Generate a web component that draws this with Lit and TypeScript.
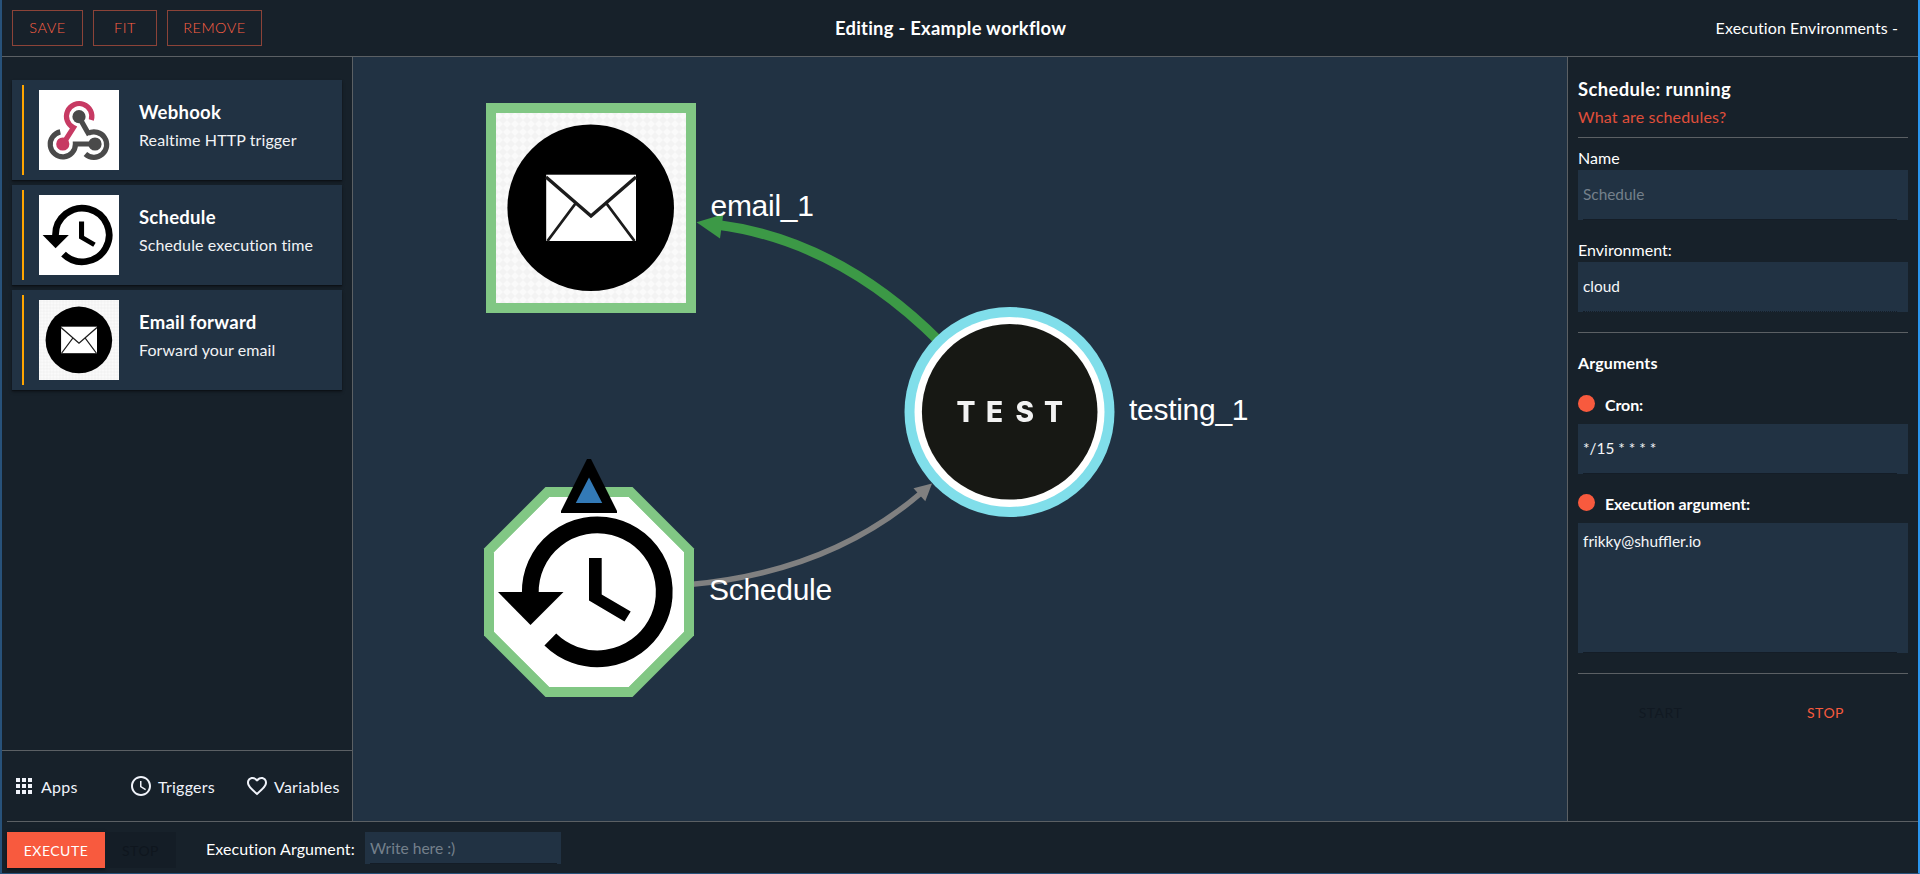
import { LitElement, html, svg, css } from "lit";
import { customElement, property } from "lit/decorators.js";

const emailArt = svg`
  <defs>
    <pattern id="weave" width="8" height="8" patternUnits="userSpaceOnUse">
      <rect width="8" height="8" fill="#fafafa"></rect>
      <path d="M4 0L8 4L4 8L0 4Z" fill="#f3f3f3"></path>
    </pattern>
  </defs>
  <rect width="200" height="200" fill="url(#weave)"></rect>
  <circle cx="99.7" cy="99.8" r="83.3" fill="#000"></circle>
  <rect x="55.2" y="66.7" width="89.8" height="66.3" fill="#fff"></rect>
  <path d="M55 69L100 108L145 69" fill="none" stroke="#1c1c1c" stroke-width="3.4"></path>
  <path d="M84.5 95.5L56.5 133M115.5 95.5L143.5 133" fill="none" stroke="#1c1c1c" stroke-width="2.8"></path>`;

const scheduleArt = svg`
  <rect width="200" height="200" fill="#fff"></rect>
  <path d="M41.3 101A67 67 0 1 1 61.3 147.6" fill="none" stroke="#000" stroke-width="16.8"></path>
  <path d="M9 100H74.5L41.5 133Z"></path>
  <path d="M100 66H112.7V102.5L141.7 119.5L135.5 129.5L100 108.5Z"></path>`;

const webhookArt = svg`
  <rect width="80" height="80" fill="#fff"></rect>
  <g fill="none" stroke="#4a4a4a" stroke-width="5.2">
    <path d="M21.3 41.9A12.6 12.6 0 1 0 36.4 54H56"></path>
    <path d="M40 27L50.2 45"></path>
    <path d="M49.3 43.3A12.7 12.7 0 1 1 46.4 64"></path>
  </g>
  <path d="M52.3 30A12.7 12.7 0 1 0 34.5 37.6L24 54" fill="none" stroke="#c73a63" stroke-width="5.2"></path>
  <circle cx="40" cy="26.7" r="6.6" fill="#4a4a4a"></circle>
  <circle cx="56" cy="54" r="6.6" fill="#4a4a4a"></circle>
  <circle cx="23.8" cy="54" r="6.6" fill="#c73a63"></circle>`;

@customElement("trigger-card")
class TriggerCard extends LitElement {
  @property() heading = "";
  @property() detail = "";
  @property() art = "";

  static styles = css`
    :host { display: flex; height: 100px; box-sizing: border-box; padding: 5px 10px;
      background: #213243; box-shadow: 0 2px 3px rgba(0,0,0,.35), 0 1px 1px rgba(0,0,0,.25); }
    .bar { width: 2px; background: #ffa500; margin-right: 15px; }
    svg { width: 80px; height: 80px; margin-top: 5px; display: block; }
    .texts { margin: 15px 0 0 20px; }
    .heading { font-size: 18.5px; line-height: 25px; font-weight: 700; color: #fff; letter-spacing: .25px; }
    .detail { font-size: 16px; line-height: 20px; margin-top: 5px; color: #f1f3f5; letter-spacing: .1px; }
  `;

  render() {
    const box = this.art === "webhook" ? "0 0 80 80" : "0 0 200 200";
    const drawing = this.art === "webhook" ? webhookArt : this.art === "email" ? emailArt : scheduleArt;
    return html`
      <div class="bar"></div>
      <svg viewBox=${box}>${drawing}</svg>
      <div class="texts">
        <div class="heading">${this.heading}</div>
        <div class="detail">${this.detail}</div>
      </div>`;
  }
}

@customElement("flow-canvas")
class FlowCanvas extends LitElement {
  static styles = css`
    :host { display: block; background: #213243; overflow: hidden; }
    svg { display: block; }
    .label { font: 30px "Liberation Sans", Arial, sans-serif; fill: #fff; letter-spacing: -.28px; }
    .badge { font: 800 28px Inter, "Liberation Sans", sans-serif; fill: #f2f2f2; filter: blur(.6px); }
  `;

  render() {
    return html`
      <svg width="1214" height="764" viewBox="353 57 1214 764">
        <path d="M716 224.6Q838 240 940 342" fill="none" stroke="#3c9946" stroke-width="10"></path>
        <path d="M696.5 222.3L723.3 214.3L720 238.5Z" fill="#3c9946"></path>
        <path d="M690 584.5Q829 572 921 493" fill="none" stroke="#808080" stroke-width="5.6"></path>
        <path d="M932 483.5L913.5 488.3L925.3 501.3Z" fill="#808080"></path>

        <rect x="486" y="103" width="210" height="210" fill="#81c784"></rect>
        <svg x="496" y="113" width="190" height="190" viewBox="5 5 190 190">${emailArt}</svg>

        <path d="M545.5 487H632.5L694 548.5V635.5L632.5 697H545.5L484 635.5V548.5Z" fill="#81c784"></path>
        <path d="M549.6 497H628.4L684 552.4V631.4L628.4 687H549.6L494 631.4V552.4Z" fill="#fff"></path>
        <clipPath id="oct"><path d="M60.6 5H139.4L195 60.4V139.4L139.4 195H60.6L5 139.4V60.4Z"></path></clipPath>
        <svg x="494" y="497" width="190" height="190" viewBox="5 5 190 190">
          <g clip-path="url(#oct)">${scheduleArt}</g>
        </svg>
        <path d="M587 459H591L617 511V513H561V511Z"></path>
        <path d="M589 477.5L602.2 503H575.8Z" fill="#337ab7"></path>

        <circle cx="1009.5" cy="412" r="105" fill="#80deea"></circle>
        <circle cx="1009.5" cy="412" r="95" fill="#fff"></circle>
        <circle cx="1009.7" cy="411.8" r="87.8" fill="#171814"></circle>
        <text class="badge" x="956.5 986 1015.5 1044" y="422.3">TEST</text>

        <text class="label" x="710.5" y="216">email_1</text>
        <text class="label" x="1129" y="420">testing_1</text>
        <text class="label" x="709" y="600">Schedule</text>
      </svg>`;
  }
}

@customElement("app-root")
class AppRoot extends LitElement {
  static styles = css`
    :host { display: block; width: 1920px; height: 874px; box-sizing: border-box; overflow: hidden;
      background: #17212a; color: #fff; font-family: Lato, "Noto Sans", sans-serif; font-size: 16px;
      border-left: 2px solid #28527a; border-right: 2px solid #2b96ee; border-bottom: 1px solid #28527a; }
    * { box-sizing: border-box; }
    .page { display: flex; flex-direction: column; height: 873px; }
    header { height: 57px; border-bottom: 1px solid #5b6064; display: grid;
      grid-template-columns: 823px 1fr auto; align-items: center; padding: 0 20px 1px 10px; }
    .actions { display: flex; gap: 10px; }
    .btn { height: 36px; display: flex; align-items: center; justify-content: center; color: #ff6044;
      border: 1px solid #8c4338; font-size: 14.5px; letter-spacing: .5px; font-weight: 300; }
    .save { width: 71px; } .fit { width: 64px; } .remove { width: 95px; }
    .title { font-weight: 700; font-size: 18.4px; letter-spacing: .25px; }
    .envs { letter-spacing: .1px; }
    .main { display: flex; height: 764px; }
    .side { width: 351px; border-right: 1px solid #5b6064; display: flex; flex-direction: column; }
    .cards { flex: 1; padding: 23px 10px 0; display: flex; flex-direction: column; gap: 5px; }
    .tabs { height: 71px; border-top: 1px solid #5b6064; display: flex; align-items: center; color: #f0f3fa;
      padding: 0 0 0 10px; }
    .tab { display: flex; align-items: center; height: 24px; letter-spacing: .25px; }
    .tab svg { width: 24px; height: 24px; fill: #f0f3fa; margin-right: 5px; }
    .apps { width: 117px; } .triggers { width: 116px; }
    flow-canvas { width: 1214px; }
    .props { flex: 1; border-left: 1px solid #5b6064; padding: 0 10px; display: flex; flex-direction: column; }
    .heading { margin-top: 19px; line-height: 26px; font-size: 18.4px; font-weight: 700; letter-spacing: .4px; }
    .link { margin-top: 5px; line-height: 20px; color: #e04f3a; letter-spacing: .17px; }
    .rule { height: 1px; background: #5b6064; flex: none; }
    .r1 { margin-top: 10px; } .r2 { margin-top: 20px; }
    .name { margin-top: 10px; line-height: 20px; margin-bottom: 2px; }
    .label { letter-spacing: .03px; }
    .env { margin-top: 20px; line-height: 20px; margin-bottom: 2px; }
    .field { height: 50px; background: #213243; padding: 0 11px 0 5px; color: #f4f6f8; font-weight: 400;
      flex: none; font-size: 15.4px; }
    .inner { height: 100%; border-bottom: 1px solid #141d27; padding-top: 14px; line-height: 20px; }
    .dotted { border-bottom-style: dotted; }
    .hint { color: #74808b; }
    .args { margin: 20px 0 0; line-height: 20px; font-weight: 700; letter-spacing: .15px; }
    .arg { display: flex; align-items: flex-start; gap: 10px; height: 29px; line-height: 20px; font-weight: 700;
      letter-spacing: -.1px; }
    .cron { margin-top: 22px; } .exec { margin-top: 20px; }
    .dot { width: 17px; height: 17px; border-radius: 50%; background: #f85a3e; }
    .area { height: 130px; }
    .area .inner { padding-top: 8px; }
    .pair { display: flex; margin-top: 20px; height: 36px; font-size: 14px; letter-spacing: .5px; }
    .pair div { flex: 1; display: flex; align-items: center; justify-content: center; }
    .off { color: #111922; }
    .on { color: #f85a3e; }
    footer { margin-left: 5px; height: 52px; border-top: 1px solid #5b6064; display: flex;
      padding-top: 10px; align-items: flex-start; }
    footer > div { flex: none; }
    .run { width: 98px; height: 36px; background: #f85a3e; color: #fff; display: flex; align-items: center;
      justify-content: center; font-size: 14px; letter-spacing: .5px;
      box-shadow: 0 2px 2px rgba(0,0,0,.3), 0 1px 5px rgba(0,0,0,.2); }
    .halt { width: 71px; height: 36px; background: #141d26; color: #0f161e; display: flex; align-items: center;
      justify-content: center; font-size: 14px; letter-spacing: .5px; }
    .arglabel { width: 189px; padding-left: 30px; line-height: 33px; letter-spacing: .1px; white-space: nowrap; }
    .write { width: 196px; height: 32px; background: #213243; padding: 0 4px 0 5px; font-size: 15.6px; }
    .write .inner { padding-top: 6px; }
  `;

  render() {
    return html`
      <div class="page">
        <header>
          <div class="actions">
            <div class="btn save">SAVE</div><div class="btn fit">FIT</div><div class="btn remove">REMOVE</div>
          </div>
          <div class="title">Editing - Example workflow</div>
          <div class="envs">Execution Environments -</div>
        </header>
        <div class="main">
          <div class="side">
            <div class="cards">
              <trigger-card art="webhook" heading="Webhook" detail="Realtime HTTP trigger"></trigger-card>
              <trigger-card art="schedule" heading="Schedule" detail="Schedule execution time"></trigger-card>
              <trigger-card art="email" heading="Email forward" detail="Forward your email"></trigger-card>
            </div>
            <div class="tabs">
              <div class="tab apps">
                <svg viewBox="0 0 24 24"><path d="M4 8h4V4H4v4zm6 12h4v-4h-4v4zm-6 0h4v-4H4v4zm0-6h4v-4H4v4zm6 0h4v-4h-4v4zm6-10v4h4V4h-4zm-6 4h4V4h-4v4zm6 6h4v-4h-4v4zm0 6h4v-4h-4v4z"></path></svg>
                <span>Apps</span>
              </div>
              <div class="tab triggers">
                <svg viewBox="0 0 24 24"><path d="M11.99 2C6.47 2 2 6.48 2 12s4.47 10 9.99 10C17.52 22 22 17.52 22 12S17.52 2 11.99 2zM12 20c-4.42 0-8-3.58-8-8s3.58-8 8-8 8 3.58 8 8-3.58 8-8 8zm.5-13H11v6l5.25 3.15.75-1.23-4.5-2.67z"></path></svg>
                <span>Triggers</span>
              </div>
              <div class="tab">
                <svg viewBox="0 0 24 24"><path d="M16.5 3c-1.74 0-3.41.81-4.5 2.09C10.91 3.81 9.24 3 7.5 3 4.42 3 2 5.42 2 8.5c0 3.78 3.4 6.86 8.55 11.54L12 21.35l1.45-1.32C18.6 15.36 22 12.28 22 8.5 22 5.42 19.58 3 16.5 3zm-4.4 15.55l-.1.1-.1-.1C7.14 14.24 4 11.39 4 8.5 4 6.5 5.5 5 7.5 5c1.54 0 3.04.99 3.57 2.36h1.87C13.46 5.99 14.96 5 16.5 5c2 0 3.5 1.5 3.5 3.5 0 2.89-3.14 5.74-7.9 10.05z"></path></svg>
                <span>Variables</span>
              </div>
            </div>
          </div>
          <flow-canvas></flow-canvas>
          <div class="props">
            <div class="heading">Schedule: running</div>
            <div class="link">What are schedules?</div>
            <div class="rule r1"></div>
            <div class="label name">Name</div>
            <div class="field"><div class="inner hint">Schedule</div></div>
            <div class="label env">Environment:</div>
            <div class="field"><div class="inner dotted">cloud</div></div>
            <div class="rule r2"></div>
            <div class="args">Arguments</div>
            <div class="arg cron"><div class="dot"></div><span>Cron:</span></div>
            <div class="field"><div class="inner">*/15 * * * *</div></div>
            <div class="arg exec"><div class="dot"></div><span>Execution argument:</span></div>
            <div class="field area"><div class="inner">frikky@shuffler.io</div></div>
            <div class="rule r2"></div>
            <div class="pair"><div class="off">START</div><div class="on">STOP</div></div>
          </div>
        </div>
        <footer>
          <div class="run">EXECUTE</div>
          <div class="halt">STOP</div>
          <div class="arglabel">Execution Argument:</div>
          <div class="write"><div class="inner hint">Write here :)</div></div>
        </footer>
      </div>`;
  }
}
